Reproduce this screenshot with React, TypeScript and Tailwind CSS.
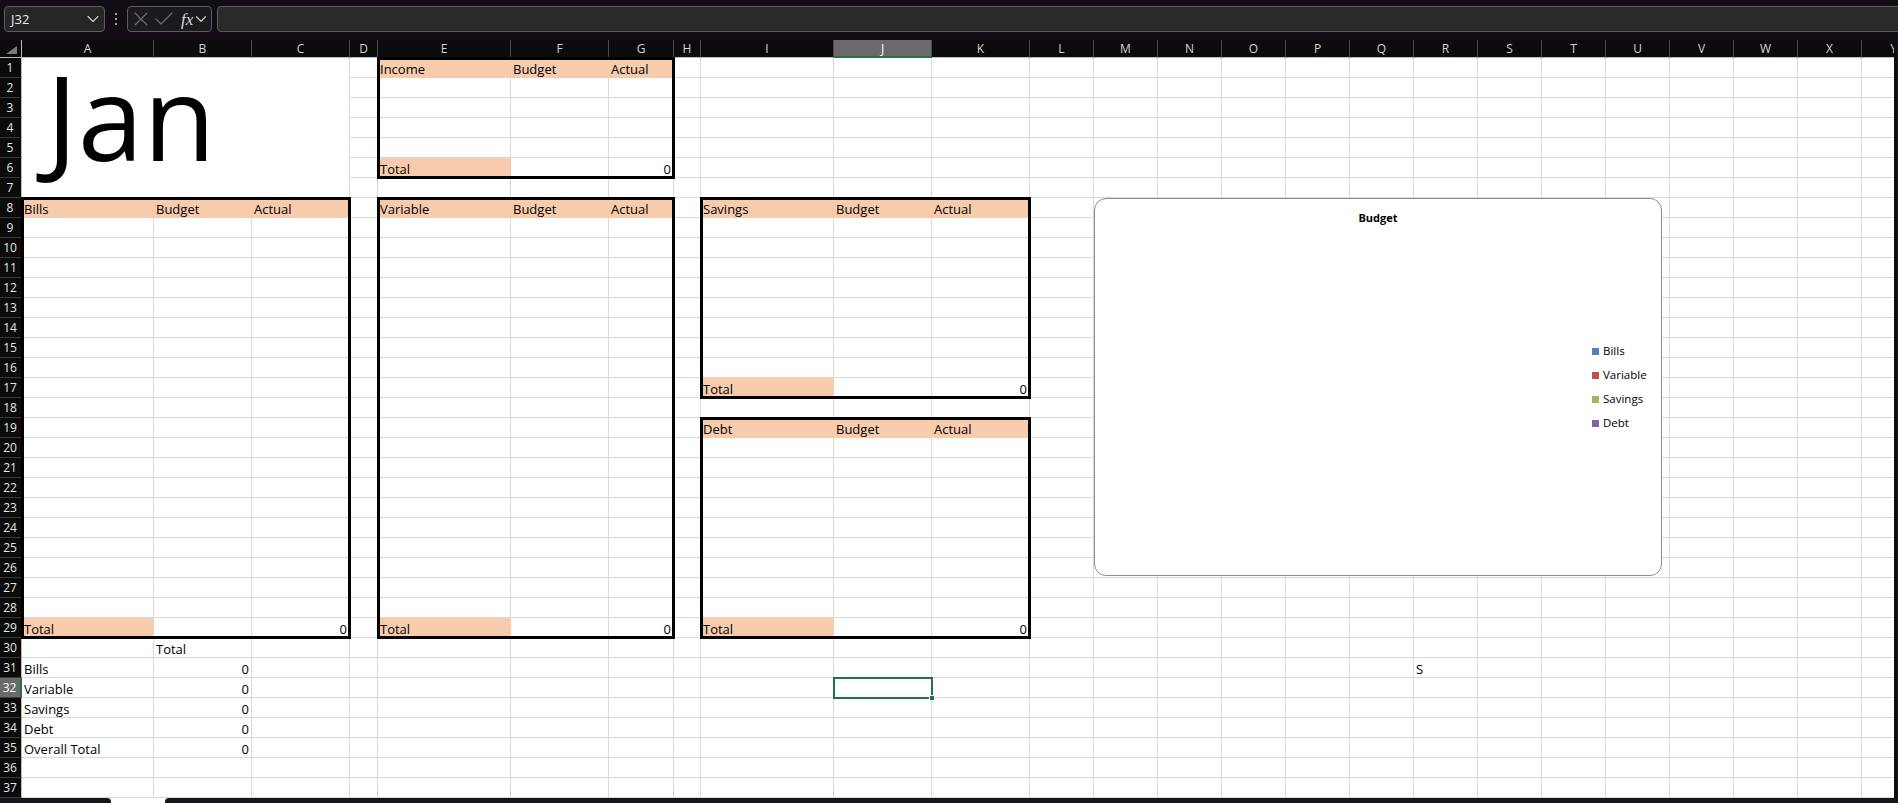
import React from "react";
import { ChevronDown, X, Check } from "lucide-react";

const COLS = ["A","B","C","D","E","F","G","H","I","J","K","L","M","N","O","P","Q","R","S","T","U","V","W","X","Y"];
const ROWS = Array.from({ length: 37 }, (_, i) => i + 1);

type CellDef = { t: string; fill?: boolean; right?: boolean };

const DATA: Record<string, CellDef> = {
  E1: { t: "Income", fill: true }, F1: { t: "Budget", fill: true }, G1: { t: "Actual", fill: true },
  E6: { t: "Total", fill: true }, G6: { t: "0", right: true },
  A8: { t: "Bills", fill: true }, B8: { t: "Budget", fill: true }, C8: { t: "Actual", fill: true },
  A29: { t: "Total", fill: true }, C29: { t: "0", right: true },
  E8: { t: "Variable", fill: true }, F8: { t: "Budget", fill: true }, G8: { t: "Actual", fill: true },
  E29: { t: "Total", fill: true }, G29: { t: "0", right: true },
  I8: { t: "Savings", fill: true }, J8: { t: "Budget", fill: true }, K8: { t: "Actual", fill: true },
  I17: { t: "Total", fill: true }, K17: { t: "0", right: true },
  I19: { t: "Debt", fill: true }, J19: { t: "Budget", fill: true }, K19: { t: "Actual", fill: true },
  I29: { t: "Total", fill: true }, K29: { t: "0", right: true },
  B30: { t: "Total" },
  A31: { t: "Bills" }, B31: { t: "0", right: true },
  A32: { t: "Variable" }, B32: { t: "0", right: true },
  A33: { t: "Savings" }, B33: { t: "0", right: true },
  A34: { t: "Debt" }, B34: { t: "0", right: true },
  A35: { t: "Overall Total" }, B35: { t: "0", right: true },
  R31: { t: "S" },
};

const GRID =
  "grid grid-cols-[22px_132px_98px_98px_28px_133px_98px_65px_27px_133px_98px_98px_64px_64px_64px_64px_64px_64px_64px_64px_64px_64px_64px_64px_64px_64px] grid-rows-[18px_repeat(37,20px)] w-[1926px] h-[758px]";

function Toolbar() {
  return (
    <div className="h-[40px] shrink-0 bg-[#120c15] flex items-start pt-[6px] pl-[4px] overflow-hidden">
      <div className="w-[101px] h-[26px] rounded-[4px] border border-[#5c5c5c] bg-[#262626] flex items-center justify-between pl-[6px] pr-[1px]">
        <span className="text-[13px] text-[#e8e8e8] leading-none">J32</span>
        <ChevronDown size={20} strokeWidth={1.3} className="text-[#d0d0d0]" />
      </div>
      <div className="w-[22px] h-[26px] flex flex-col items-center justify-center gap-[3px]">
        <span className="w-[2px] h-[2px] rounded-full bg-[#cfcfcf]" />
        <span className="w-[2px] h-[2px] rounded-full bg-[#cfcfcf]" />
        <span className="w-[2px] h-[2px] rounded-full bg-[#cfcfcf]" />
      </div>
      <div className="w-[85px] h-[26px] rounded-[4px] border border-[#5c5c5c] bg-[#1c1a1e] flex items-center">
        <X size={24} strokeWidth={1.1} className="text-[#6c6c6c] ml-px shrink-0" />
        <Check size={24} strokeWidth={1.1} className="text-[#6c6c6c] ml-[-1px] shrink-0" />
        <span className="ml-[5px] font-['Liberation_Serif',serif] italic text-[17px] leading-none text-[#dadada]">fx</span>
        <ChevronDown size={18} strokeWidth={1.5} className="text-[#d0d0d0] ml-[-1px] shrink-0" />
      </div>
      <div className="ml-[5px] mr-[-20px] flex-1 h-[26px] rounded-[4px] border border-[#5c5c5c] bg-[#2a2a2a]" />
    </div>
  );
}

function Cell({ id }: { id: string }) {
  const d = DATA[id];
  if (d && d.fill) {
    return (
      <div className="bg-[#f8cbad] border-r border-b border-[#f8cbad] text-[13px] leading-[20px] pt-px pl-[2px] text-black whitespace-nowrap">
        {d.t}
      </div>
    );
  }
  if (d && d.right) {
    return (
      <div className="bg-white border-r border-b border-[#dadada] text-[13px] leading-[20px] pt-px pr-[2px] text-right text-black whitespace-nowrap">
        {d.t}
      </div>
    );
  }
  return (
    <div className="bg-white border-r border-b border-[#dadada] text-[13px] leading-[20px] pt-px pl-[2px] text-black whitespace-nowrap">
      {d ? d.t : ""}
    </div>
  );
}

function Sheet() {
  return (
    <div className="relative w-[1894px] h-[758px] overflow-hidden bg-white">
      <div className={GRID}>
        {/* merged A1:C7 */}
        <div className="col-start-2 col-end-5 row-start-2 row-end-9 bg-white border-r border-b border-[#dadada] pl-[24px] pt-[8px]">
          <div className="text-[118px] leading-[100px] text-black">Jan</div>
        </div>
        {/* header row */}
        <div className="bg-[#0b0b0b] border-r border-b border-r-[#bdbdbd] border-b-[#bdbdbd] flex items-end justify-end pr-[4px] pb-[3px]">
          <svg width="11" height="8" viewBox="0 0 11 8">
            <polygon points="11,0 11,8 0,8" fill="#7a7a7a" />
          </svg>
        </div>
        {COLS.map((c) =>
          c === "J" ? (
            <div key={c} className="bg-[#6a6a6a] border-r border-r-[#4a4a4a] border-b-2 border-b-[#217346] text-center text-[12px] leading-[17px] text-white">
              {c}
            </div>
          ) : (
            <div key={c} className="bg-[#0b0b0b] border-r border-b border-r-[#4a4a4a] border-b-[#bdbdbd] text-center text-[12px] leading-[17px] text-[#d4d4d4] overflow-hidden">
              {c}
            </div>
          )
        )}
        {ROWS.map((r) => (
          <React.Fragment key={r}>
            {r === 32 ? (
              <div className="bg-[#6a6a6a] border-b border-b-[#3a3a3a] border-r-2 border-r-[#217346] text-center text-[12px] leading-[20px] text-white pr-[1px]">
                {r}
              </div>
            ) : (
              <div className="bg-[#0b0b0b] border-b border-r border-b-[#3a3a3a] border-r-[#bdbdbd] text-center text-[12px] leading-[20px] text-[#e4e4e4] pr-[1px]">
                {r}
              </div>
            )}
            {COLS.map((c, ci) =>
              r <= 7 && ci < 3 ? null : <Cell key={c + r} id={c + r} />
            )}
          </React.Fragment>
        ))}
      </div>

      {/* overlay layer: table borders, chart, selection */}
      <div className={"absolute left-0 top-0 pointer-events-none " + GRID}>
        <div className="col-start-6 col-end-9 row-start-2 row-end-8 -m-px border-[3px] border-black" />
        <div className="col-start-2 col-end-5 row-start-9 row-end-31 -m-px border-[3px] border-black" />
        <div className="col-start-6 col-end-9 row-start-9 row-end-31 -m-px border-[3px] border-black" />
        <div className="col-start-10 col-end-13 row-start-9 row-end-19 -m-px border-[3px] border-black" />
        <div className="col-start-10 col-end-13 row-start-20 row-end-31 -m-px border-[3px] border-black" />
        <div className="col-start-11 col-end-12 row-start-33 row-end-34 -m-px border-2 border-[#217346] relative">
          <div className="absolute right-[-4px] bottom-[-4px] w-[6px] h-[6px] bg-[#217346] border border-white" />
        </div>
        <div className="col-start-14 col-end-23 row-start-9 row-end-28 mr-[8px] mb-[2px] border border-[#8c8c8c] rounded-[12px] bg-white flex flex-col">
          <div className="pt-[11px] text-center text-[11px] leading-[15px] font-bold text-black">Budget</div>
          <div className="ml-[497px] mt-[114px] flex flex-col">
            {[
              { n: "Bills", c: "bg-[#4f81bd]" },
              { n: "Variable", c: "bg-[#c0504d]" },
              { n: "Savings", c: "bg-[#9bbb59]" },
              { n: "Debt", c: "bg-[#8064a2]" },
            ].map((it) => (
              <div key={it.n} className="h-[24px] flex items-center gap-[4px]">
                <span className={"w-[7px] h-[7px] " + it.c} />
                <span className="text-[11.5px] leading-[14px] text-black">{it.n}</span>
              </div>
            ))}
          </div>
        </div>
      </div>
    </div>
  );
}

export default function App() {
  return (
    <div className="w-[1898px] h-[803px] overflow-hidden bg-[#120c15] font-['Open_Sans',sans-serif] flex flex-col">
      <Toolbar />
      <div className="flex h-[758px] shrink-0">
        <Sheet />
        <div className="flex-1 bg-[#120c15]" />
      </div>
      <div className="h-[5px] shrink-0 flex bg-white">
        <div className="w-[111px] bg-[#19131e] rounded-tr-[4px]" />
        <div className="w-[54px]" />
        <div className="flex-1 bg-[#19131e] rounded-tl-[4px]" />
      </div>
    </div>
  );
}
